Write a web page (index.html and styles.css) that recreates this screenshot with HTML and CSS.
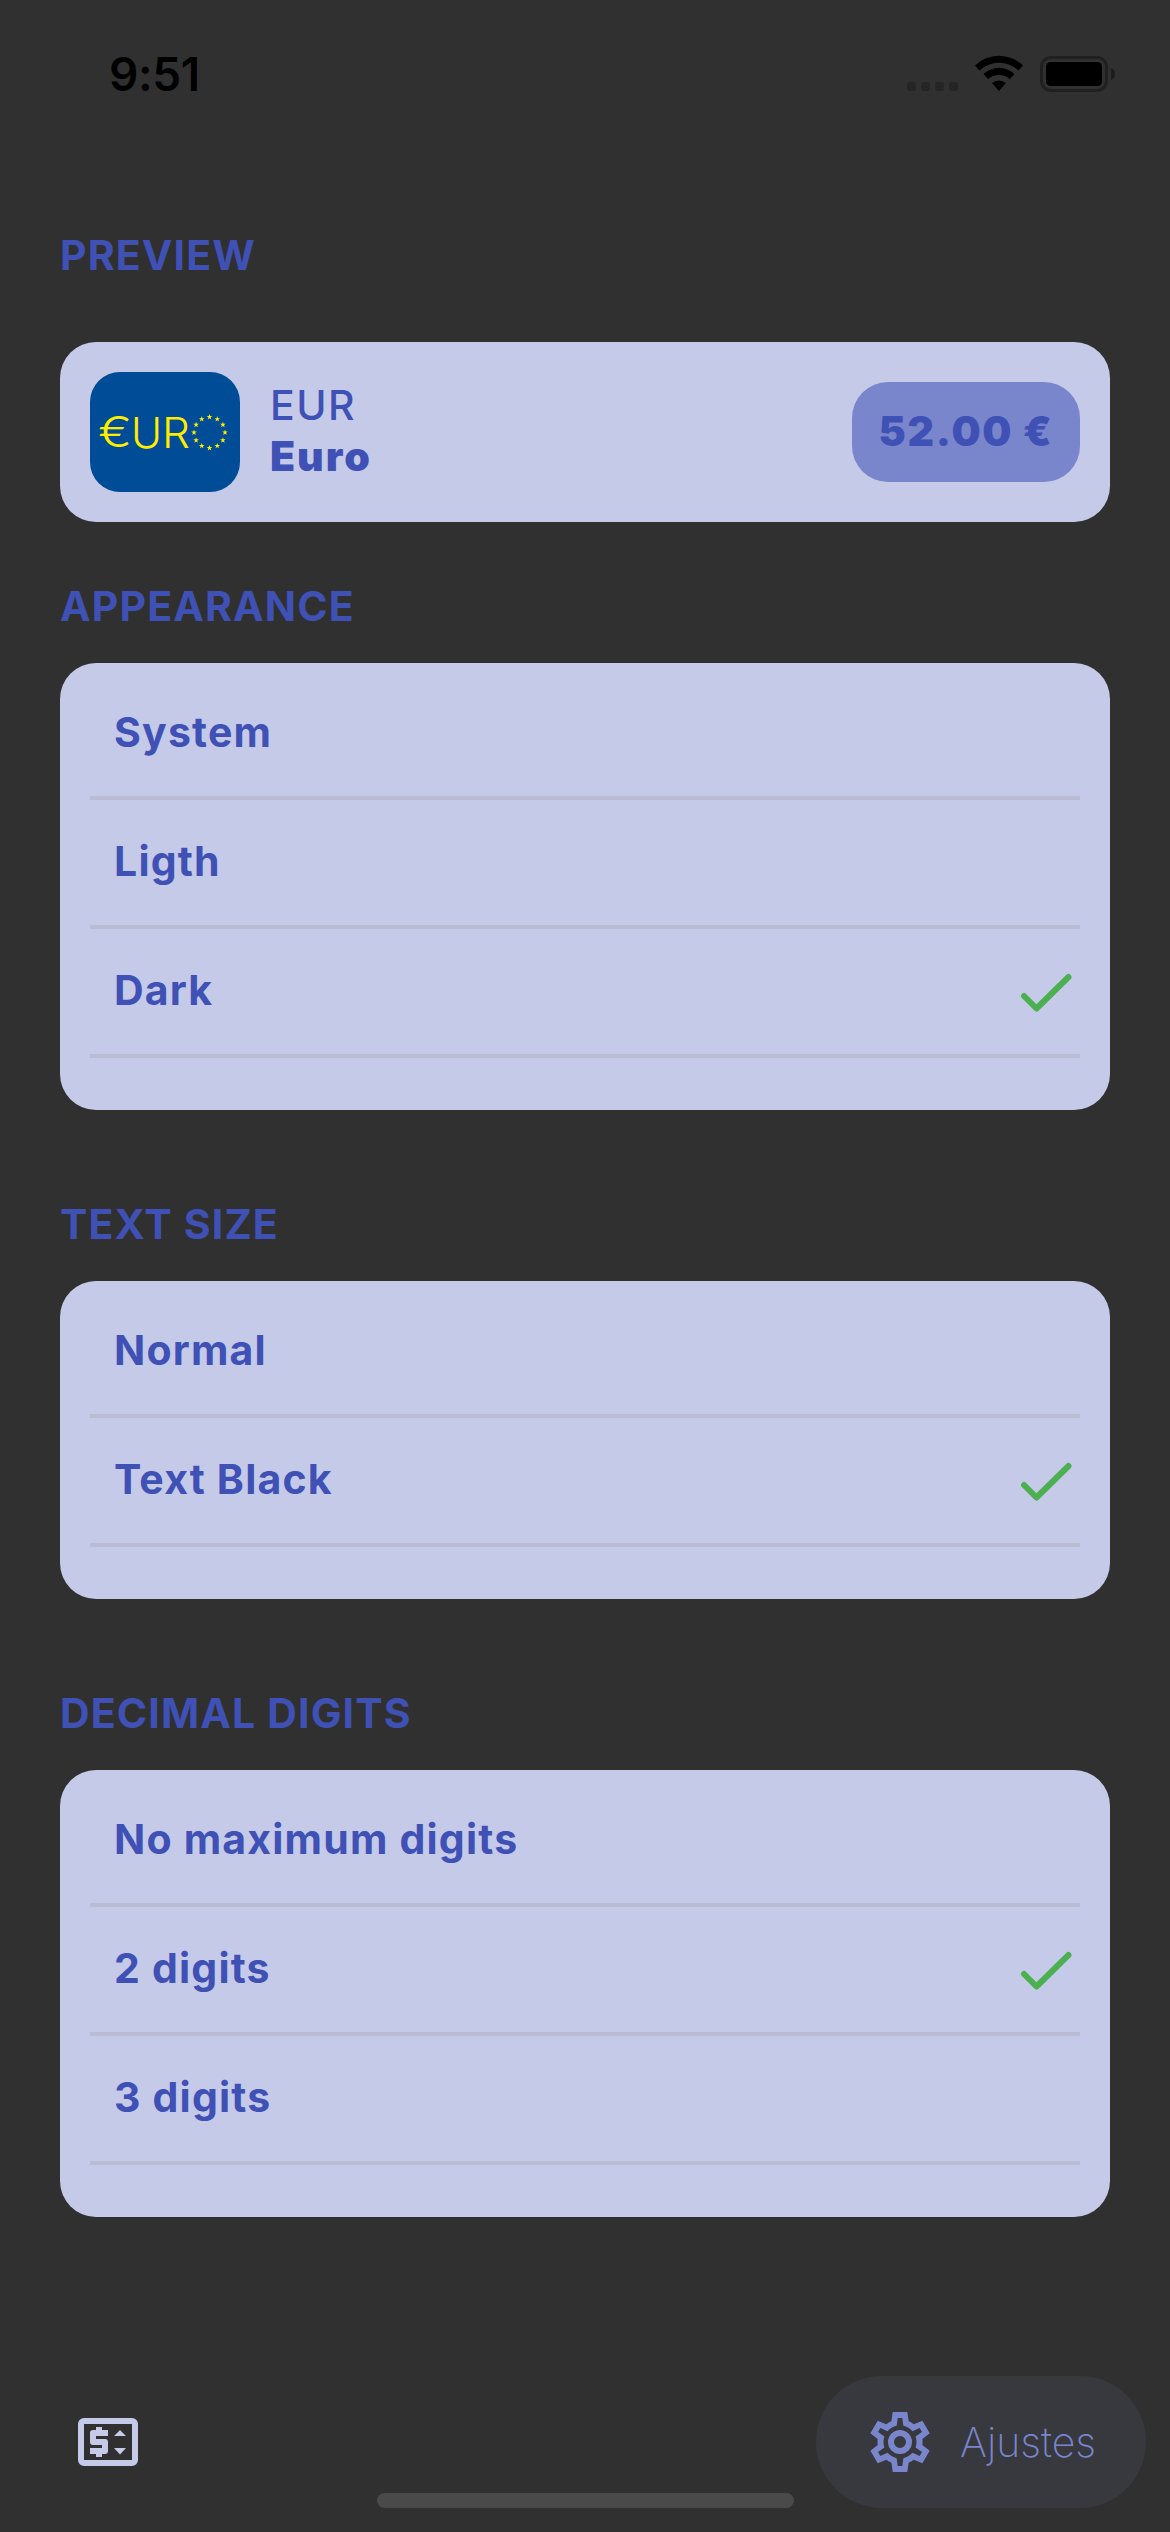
FILE: index.html
```html
<!DOCTYPE html>
<html lang="en">
<head>
<meta charset="utf-8">
<title>Ajustes</title>
<link rel="stylesheet" href="styles.css">
</head>
<body>
<svg class="defs" width="0" height="0" aria-hidden="true">
  <symbol id="check" viewBox="0 0 52 40"><path d="M4 23l12.500 12.500L48.500 4" fill="none" stroke="#4caf50" stroke-width="6" stroke-linecap="round" stroke-linejoin="round"/></symbol>
  <symbol id="star" viewBox="-5 -5 10 10"><path d="M0-5L1.200-1.600 4.800-1.500 1.900.600 2.900 4 0 2-2.900 4-1.900.600-4.800-1.500-1.200-1.600z"/></symbol>
</svg>
<div class="screen">
  <header class="status">
    <span class="time">9:51</span>
    <svg class="indicators" width="210" height="40" viewBox="0 0 210 40">
      <g fill="#252525"><rect x="2" y="28" width="9" height="9" rx="3"/><rect x="16" y="28" width="9" height="9" rx="3"/><rect x="30" y="28" width="9" height="9" rx="3"/><rect x="44" y="28" width="9" height="9" rx="3"/></g>
      <path d="M70 11.500a34.500 34.500 0 0 1 48 0l-4.500 5a28.500 28.500 0 0 0-39 0zM78.500 20a22.500 22.500 0 0 1 31 0l-4.700 5.200a16 16 0 0 0-21.600 0zM87 29a11 11 0 0 1 14 0l-7 8z"/>
      <rect x="136.500" y="3.500" width="65" height="33" rx="9.500" fill="none" stroke="#202020" stroke-width="3"/>
      <rect x="141" y="8" width="56" height="24" rx="4.500"/>
      <path d="M206 14a6.500 6.500 0 0 1 0 12z" fill="#1c1c1c"/>
    </svg>
  </header>

  <main class="content">
    <section class="section preview">
      <h2 class="heading">PREVIEW</h2>
      <div class="card currency">
        <svg class="flag" width="150" height="120" viewBox="0 0 150 120">
          <rect width="150" height="120" rx="30" fill="#004c97"/>
          <g class="flag-text">
            <text x="8" y="75" textLength="34" lengthAdjust="spacingAndGlyphs">€</text>
            <text x="41" y="76" textLength="31" lengthAdjust="spacingAndGlyphs">U</text>
            <text x="72" y="76" textLength="28" lengthAdjust="spacingAndGlyphs">R</text>
          </g>
          <g fill="#ffed00">
            <use href="#star" x="116.500" y="42" width="6" height="6"/>
            <use href="#star" x="124.250" y="44.100" width="6" height="6"/>
            <use href="#star" x="129.900" y="49.750" width="6" height="6"/>
            <use href="#star" x="132" y="57.500" width="6" height="6"/>
            <use href="#star" x="129.900" y="65.250" width="6" height="6"/>
            <use href="#star" x="124.250" y="70.900" width="6" height="6"/>
            <use href="#star" x="116.500" y="73" width="6" height="6"/>
            <use href="#star" x="108.750" y="70.900" width="6" height="6"/>
            <use href="#star" x="103.100" y="65.250" width="6" height="6"/>
            <use href="#star" x="101" y="57.500" width="6" height="6"/>
            <use href="#star" x="103.100" y="49.750" width="6" height="6"/>
            <use href="#star" x="108.750" y="44.100" width="6" height="6"/>
          </g>
        </svg>
        <div class="names"><span class="code">EUR</span><span class="name">Euro</span></div>
        <span class="amount">52.00 €</span>
      </div>
    </section>

    <section class="section">
      <h2 class="heading">APPEARANCE</h2>
      <ul class="card list">
        <li class="row"><span class="label">System</span></li>
        <li class="row"><span class="label">Ligth</span></li>
        <li class="row"><span class="label">Dark</span><svg class="check" width="52" height="40"><use href="#check"/></svg></li>
      </ul>
    </section>

    <section class="section">
      <h2 class="heading">TEXT SIZE</h2>
      <ul class="card list">
        <li class="row"><span class="label">Normal</span></li>
        <li class="row"><span class="label">Text Black</span><svg class="check" width="52" height="40"><use href="#check"/></svg></li>
      </ul>
    </section>

    <section class="section">
      <h2 class="heading">DECIMAL DIGITS</h2>
      <ul class="card list">
        <li class="row"><span class="label">No maximum digits</span></li>
        <li class="row"><span class="label">2 digits</span><svg class="check" width="52" height="40"><use href="#check"/></svg></li>
        <li class="row"><span class="label">3 digits</span></li>
      </ul>
    </section>
  </main>

  <nav class="tabs">
    <svg class="tab-icon" width="72" height="72" viewBox="0 0 24 24" fill="#c5cae9">
      <path fill-rule="evenodd" d="M4 4h16a2 2 0 0 1 2 2v12a2 2 0 0 1-2 2H4a2 2 0 0 1-2-2V6a2 2 0 0 1 2-2zM4 6v12h16V6z"/>
      <path d="M8 7v1H7a1 1 0 0 0-1 1v3a1 1 0 0 0 1 1h3v1H6v2h2v1h2v-1h1a1 1 0 0 0 1-1v-3a1 1 0 0 0-1-1H8v-1h4V8h-2V7zM14 10l2-2 2 2zM14 14h4l-2 2.200z"/>
    </svg>
    <div class="tab-active">
      <svg width="72" height="72" viewBox="0 0 24 24" fill="#7986cb" fill-rule="evenodd">
        <path d="M19.440 12.990q.090-.500.090-1t-.070-.980l2.450-1.900-2.430-4.220-2.870 1.160c-.520-.400-1.090-.740-1.710-1L14.440 2H9.570l-.440 3.070c-.620.260-1.190.600-1.710 1L4.560 4.890 2.120 9.110l2.440 1.920q-.060.480-.060.960t.080.980l-2.440 1.910 2.430 4.200 2.880-1.150c.530.410 1.100.750 1.700 1L9.580 22h4.850l.44-3.070c.620-.260 1.200-.600 1.710-1l2.880 1.150 2.430-4.200zM11.250 4l-.370 2.610c-1.200.250-2.260.890-3.030 1.780L5.440 7.350l-.750 1.300L6.800 10.200c-.4 1.170-.4 2.440 0 3.600l-2.120 1.560.750 1.300 2.430-1.040c.770.880 1.820 1.520 3.010 1.760l.370 2.620h1.520l.370-2.610c1.190-.250 2.240-.890 3.010-1.770l2.430 1.040.750-1.300-2.120-1.550c.4-1.170.4-2.440 0-3.610l2.110-1.550-.750-1.300-2.410 1.040c-.770-.890-1.830-1.530-3.030-1.770L12.750 4z"/>
        <path d="M12 8a4 4 0 1 1 0 8 4 4 0 0 1 0-8zM12 10a2 2 0 1 0 0 4 2 2 0 0 0 0-4z"/>
      </svg>
      <span class="tab-label">Ajustes</span>
    </div>
  </nav>
  <div class="home-indicator"></div>
</div>
</body>
</html>
```
FILE: styles.css
```css
* { box-sizing: border-box; margin: 0; padding: 0; }
body {
  background: #303030;
  color: #3f51b5;
  font-family: Inter, "Liberation Sans", sans-serif;
  font-size: 41px;
}
.defs { position: absolute; }
.screen {
  position: relative;
  width: 1170px;
  height: 2532px;
  display: flex;
  flex-direction: column;
  overflow: hidden;
}
.status {
  height: 230px;
  padding: 44px 55px 0 109px;
  display: flex;
  justify-content: space-between;
  align-items: flex-start;
}
.time {
  color: #000;
  font-size: 46px;
  line-height: 60px;
  font-weight: 600;
  letter-spacing: -0.4px;
}
.indicators { margin-top: 10px; }
.content { padding: 0 60px; flex: 1; }
.section { margin-bottom: 89px; }
.preview { margin-bottom: 59px; }
.heading {
  height: 50px;
  margin-bottom: 32px;
  font-size: 41px;
  line-height: 50px;
  font-weight: 700;
  letter-spacing: 1.15px;
}
.preview .heading { margin-bottom: 62px; }
.card { background: #c5cae9; border-radius: 36px; }
.currency {
  height: 180px;
  padding: 0 30px;
  display: flex;
  align-items: center;
}
.flag-text {
  fill: #ffed00;
  font-family: Inter, sans-serif;
  font-size: 42px;
  font-weight: 300;
}
.names {
  display: flex;
  flex-direction: column;
  padding: 0 0 3px 30px;
  line-height: 51px;
}
.code { font-weight: 500; letter-spacing: 1.5px; }
.name { font-weight: 900; letter-spacing: 2px; }
.amount {
  width: 228px;
  height: 100px;
  margin-left: auto;
  border-radius: 36px;
  background: #7986cb;
  line-height: 98px;
  text-align: center;
  font-weight: 900;
  letter-spacing: 1.7px;
}
.list { list-style: none; padding: 8px 30px 52px; }
.row {
  height: 129px;
  padding: 0 8px 0 24px;
  border-bottom: 4px solid #babcd4;
  display: flex;
  justify-content: space-between;
}
.label { line-height: 122px; font-weight: 700; letter-spacing: 1.2px; }
.check { margin-top: 44px; }
.tabs {
  height: 156px;
  padding: 0 24px 24px 72px;
  display: flex;
  justify-content: space-between;
  align-items: center;
}
.tab-active {
  width: 330px;
  height: 132px;
  padding-left: 48px;
  border-radius: 66px;
  background: #37393f;
  display: flex;
  align-items: center;
  gap: 24px;
}
.tab-label { color: #7986cb; font-weight: 200; }
.home-indicator {
  position: absolute;
  left: 377px;
  bottom: 24px;
  width: 417px;
  height: 15px;
  border-radius: 8px;
  background: #4a4a4a;
}
```
